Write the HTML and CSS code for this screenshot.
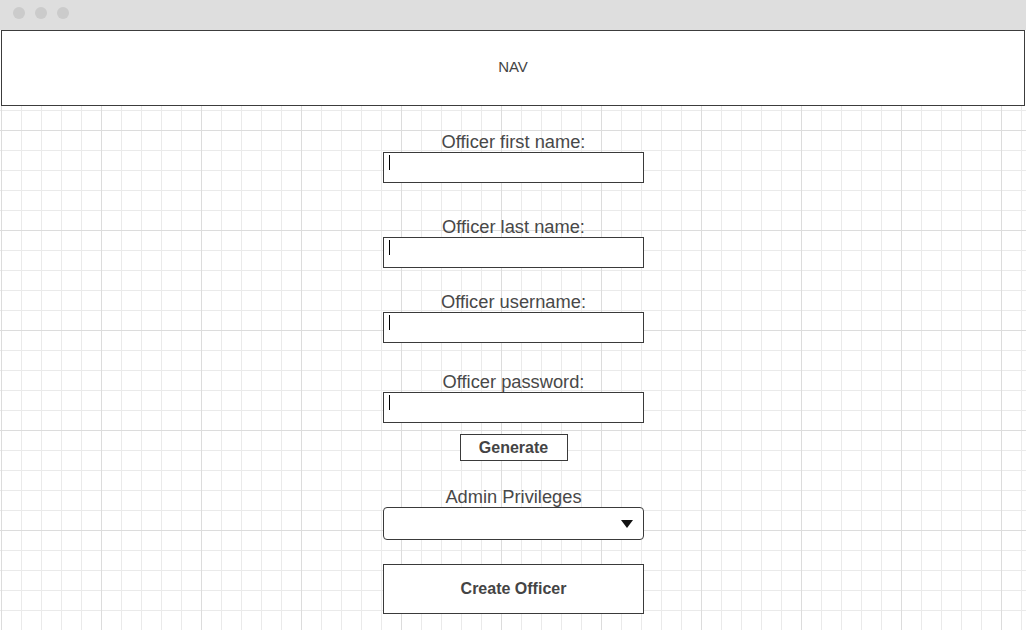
FILE: index.html
```html
<!DOCTYPE html>
<html lang="en">
<head>
<meta charset="utf-8">
<title>Create Officer</title>
<link rel="stylesheet" href="styles.css">
</head>
<body>
<div class="chrome">
  <span class="dot"></span><span class="dot"></span><span class="dot"></span>
</div>
<header class="nav">NAV</header>
<main class="canvas">
  <form class="form">
    <div class="group">
      <label class="label">Officer first name:</label>
      <div class="field"><span class="caret"></span></div>
    </div>
    <div class="group g2">
      <label class="label">Officer last name:</label>
      <div class="field"><span class="caret"></span></div>
    </div>
    <div class="group g3">
      <label class="label">Officer username:</label>
      <div class="field"><span class="caret"></span></div>
    </div>
    <div class="group g4">
      <label class="label">Officer password:</label>
      <div class="field"><span class="caret"></span></div>
    </div>
    <div class="btn-generate">Generate</div>
    <div class="group g5">
      <label class="label">Admin Privileges</label>
      <div class="select"><span class="arrow"></span></div>
    </div>
    <div class="btn-create">Create Officer</div>
  </form>
</main>
</body>
</html>
```
FILE: styles.css
```css
* { box-sizing: border-box; }
html, body { margin: 0; padding: 0; }
body {
  width: 1026px;
  height: 630px;
  overflow: hidden;
  font-family: "Liberation Sans", Arial, sans-serif;
  color: #444;
  background: #fff;
}
.chrome {
  height: 30px;
  background: #dedede;
  display: flex;
  align-items: center;
  gap: 10px;
  padding-left: 13px;
  padding-bottom: 4px;
}
.dot {
  width: 12px;
  height: 12px;
  border-radius: 50%;
  background: #cbcbcb;
}
.nav {
  height: 76px;
  margin: 0 1px;
  border: 1px solid #3c3c3c;
  background: #fff;
  display: flex;
  align-items: center;
  justify-content: center;
  font-size: 15px;
  color: #444;
  padding-bottom: 3px;
}
.canvas {
  height: 524px;
  background-color: #fff;
  background-image:
    linear-gradient(to right, #dcdcdc 1px, transparent 1px),
    linear-gradient(to bottom, #dcdcdc 1px, transparent 1px),
    linear-gradient(to right, #eaeaea 1px, transparent 1px),
    linear-gradient(to bottom, #eaeaea 1px, transparent 1px);
  background-size: 100px 100px, 100px 100px, 20px 20px, 20px 20px;
  background-position: 1px 0, 0 24px, 1px 0, 0 4px;
  display: flex;
  justify-content: center;
  padding-top: 26px;
}
.form {
  width: 261px;
  margin-left: 1px;
  display: flex;
  flex-direction: column;
  align-items: center;
}
.group {
  width: 100%;
  display: flex;
  flex-direction: column;
  align-items: center;
}
.g2 { margin-top: 34px; }
.g3 { margin-top: 24px; }
.g4 { margin-top: 29px; }
.g5 { margin-top: 26px; }
.label {
  font-size: 18.3px;
  line-height: 20px;
  color: #484848;
}
.field {
  width: 261px;
  height: 31px;
  border: 1px solid #3a3a3a;
  background: #fff;
  padding: 2px 0 0 5px;
}
.caret {
  display: block;
  width: 1px;
  height: 15px;
  background: #000;
}
.btn-generate {
  margin-top: 11px;
  width: 108px;
  height: 27px;
  border: 1px solid #3a3a3a;
  background: #fff;
  display: flex;
  align-items: center;
  justify-content: center;
  font-weight: bold;
  font-size: 16px;
  color: #444;
}
.select {
  width: 261px;
  height: 33px;
  border: 1px solid #3a3a3a;
  border-radius: 4px;
  background: #fff;
  display: flex;
  align-items: center;
  justify-content: flex-end;
  padding-right: 10px;
}
.arrow {
  width: 0;
  height: 0;
  border-left: 6px solid transparent;
  border-right: 6px solid transparent;
  border-top: 8px solid #111;
}
.btn-create {
  margin-top: 24px;
  width: 261px;
  height: 50px;
  border: 1px solid #3a3a3a;
  background: #fff;
  display: flex;
  align-items: center;
  justify-content: center;
  font-weight: bold;
  font-size: 16px;
  color: #444;
}
```
